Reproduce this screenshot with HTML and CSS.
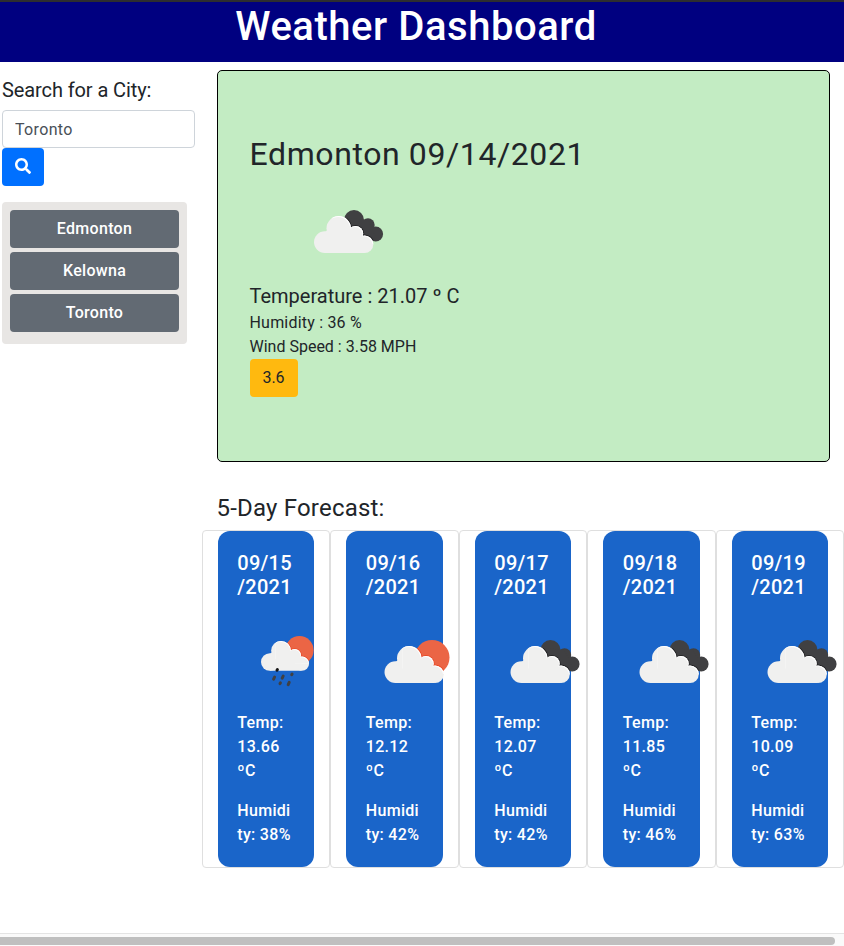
FILE: index.html
```html
<!DOCTYPE html>
<html lang="en">
<head>
<meta charset="utf-8">
<title>Weather Dashboard</title>
<link rel="stylesheet" href="styles.css">
</head>
<body>
<svg class="defs" width="0" height="0" aria-hidden="true">
  <defs>
    <g id="puffs"><circle cx="24.700" cy="18.300" r="12.200"/><circle cx="41.500" cy="23.700" r="7.700"/><circle cx="50.500" cy="34.200" r="8.800"/></g>
    <g id="cloud" fill="#f0f0ef"><use href="#puffs"/><circle cx="10.900" cy="32.100" r="10.900"/><path d="M11 43V22L25 12L41 20L50 30V43Z"/></g>
    <clipPath id="rim-clip"><path d="M18 0H70V34H18Z"/></clipPath>
    <g id="rim" clip-path="url(#rim-clip)"><use href="#puffs" fill="#fff"/><use href="#puffs" x="-.7" y=".9" fill="#f0f0ef"/><path d="M25 43V14L41 21L50 31V42Z" fill="#f0f0ef"/></g>
    <clipPath id="sun-clip"><circle cx="47.500" cy="17.500" r="17.500"/></clipPath>
    <g id="clouds">
      <g fill="#404042"><circle cx="40" cy="10" r="10"/><circle cx="54" cy="15" r="6.700"/><circle cx="61.700" cy="24" r="7.400"/><path d="M34 8L54 10L62 28L50 30Z"/></g>
      <g clip-path="url(#sun-clip)"><use href="#puffs" fill="#242426" stroke="#242426" stroke-width="2"/></g>
      <use href="#cloud"/>
      <use href="#rim"/>
    </g>
    <g id="sunny">
      <circle cx="47.500" cy="17.500" r="17.500" fill="#eb6545"/>
      <g clip-path="url(#sun-clip)"><use href="#puffs" fill="#e94b29" stroke="#e94b29" stroke-width="2"/></g>
      <use href="#cloud"/>
      <use href="#rim"/>
    </g>
    <g id="rain">
      <use href="#sunny" transform="translate(0 -4) scale(.81)"/>
      <g stroke="#404042" stroke-width="3" stroke-linecap="round"><path d="M16 30.200l.4-.7" stroke="#151515"/><path d="M12.600 39.200l1-2.200M21.200 38.200l1-2.200M27.200 44.600l1-2.200M19 43.600l.4-.7M30.700 34.700l.4-.7"/></g>
    </g>
  </defs>
</svg>
<div class="page">
  <header class="banner"><h1>Weather Dashboard</h1></header>
  <div class="layout">
    <aside class="sidebar">
      <label class="label" for="city">Search for a City:</label>
      <input class="input" id="city" type="text" value="Toronto">
      <button class="search" aria-label="Search"><svg width="16" height="16" viewBox="0 0 512 512"><path fill="#fff" d="M505 442.700L405.300 343c-4.500-4.500-10.600-7-17-7H372c27.600-35.300 44-79.700 44-128C416 93.100 322.900 0 208 0S0 93.100 0 208s93.100 208 208 208c48.300 0 92.700-16.400 128-44v16.300c0 6.400 2.500 12.500 7 17l99.700 99.700c9.400 9.400 24.600 9.400 33.900 0l28.300-28.300c9.400-9.400 9.400-24.600.1-34zM208 336c-70.700 0-128-57.200-128-128 0-70.700 57.200-128 128-128 70.700 0 128 57.200 128 128 0 70.700-57.200 128-128 128z"/></svg></button>
      <div class="history">
        <button class="city">Edmonton</button>
        <button class="city">Kelowna</button>
        <button class="city">Toronto</button>
      </div>
    </aside>
    <main class="main">
      <section class="today">
        <h2>Edmonton 09/14/2021</h2>
        <svg class="today-icon" width="180" height="100"><use href="#clouds" x="64" y="29"/></svg>
        <div class="temp">Temperature : 21.07 º C</div>
        <div class="hum">Humidity : 36 %</div>
        <div class="wind">Wind Speed : 3.58 MPH</div>
        <span class="uv">3.6</span>
      </section>
      <h3 class="forecast-title">5-Day Forecast:</h3>
      <section class="forecast">
        <div class="col"><div class="card"><h4>09/15<br>/2021</h4><svg class="icon" width="100" height="100"><use href="#rain" x="24" y="33"/></svg><p>Temp:<br>13.66<br>ºC</p><p>Humidi<br>ty: 38%</p></div></div>
        <div class="col"><div class="card"><h4>09/16<br>/2021</h4><svg class="icon" width="100" height="100"><use href="#sunny" x="18.500" y="33"/></svg><p>Temp:<br>12.12<br>ºC</p><p>Humidi<br>ty: 42%</p></div></div>
        <div class="col"><div class="card"><h4>09/17<br>/2021</h4><svg class="icon" width="100" height="100"><use href="#clouds" x="16.500" y="33"/></svg><p>Temp:<br>12.07<br>ºC</p><p>Humidi<br>ty: 42%</p></div></div>
        <div class="col"><div class="card"><h4>09/18<br>/2021</h4><svg class="icon" width="100" height="100"><use href="#clouds" x="16.500" y="33"/></svg><p>Temp:<br>11.85<br>ºC</p><p>Humidi<br>ty: 46%</p></div></div>
        <div class="col"><div class="card"><h4>09/19<br>/2021</h4><svg class="icon" width="100" height="100"><use href="#clouds" x="16.500" y="33"/></svg><p>Temp:<br>10.09<br>ºC</p><p>Humidi<br>ty: 63%</p></div></div>
      </section>
    </main>
  </div>
  <div class="scrollbar"><div class="thumb"></div></div>
</div>
</body>
</html>
```
FILE: styles.css
```css
* { box-sizing: border-box; }
body { margin: 0; background: #fff; color: #212529; font: 400 16px/24px Roboto, "Noto Sans", sans-serif; overflow: hidden; }
h1, h2, h3, h4, p { margin: 0; font-weight: 500; }
button, input { font: inherit; }
svg { display: block; }
.defs { position: absolute; }
.page { width: 844px; height: 946px; overflow: hidden; display: flex; flex-direction: column; }
.banner { height: 62px; flex: none; background: #000080; border-top: 2px solid #2d2d30; color: #fff; text-align: center; }
.banner h1 { font-size: 40px; line-height: 50px; letter-spacing: .55px; margin-right: 12px; }
.layout { flex: 1; display: flex; min-height: 0; }
.sidebar { width: 202px; flex: none; padding: 16px 7px 0 2px; }
.label { display: block; font-size: 20px; line-height: 24px; margin-bottom: 8px; letter-spacing: -.1px; }
.input { display: block; width: 193px; height: 38px; padding: 6px 12px; border: 1px solid #ced4da; border-radius: 4px; color: #495057; background: #fff; letter-spacing: .35px; }
.search { display: flex; align-items: center; justify-content: center; width: 42px; height: 38px; padding: 0 0 2px; border: 0; border-radius: 4px; background: #0070ff; }
.history { width: 185px; height: 142px; margin-top: 16px; padding: 8px; border-radius: 4px; background: #e8e6e4; display: flex; flex-direction: column; gap: 4px; }
.city { height: 38px; padding: 0; border: 0; border-radius: 4px; background: #626a73; color: #fff; font-weight: 500; letter-spacing: .3px; }
.main { width: 643px; flex: none; padding-top: 8px; }
.today { width: 613px; height: 392px; margin-left: 15px; padding: 64px 32px 64px 31.5px; background: #c3ecc3; border: 1px solid #000; border-radius: 5px; }
.today h2 { font-size: 32px; line-height: 38px; font-weight: 400; margin-bottom: 8px; letter-spacing: .6px; }
.temp { font-size: 20px; line-height: 30px; }
.hum { letter-spacing: .2px; }
.uv { display: flex; align-items: center; justify-content: center; width: 48px; height: 38px; border-radius: 4px; background: #ffb90f; }
.forecast-title { font-size: 24px; line-height: 29px; margin: 32px 0 7px 14.5px; font-weight: 400; letter-spacing: .2px; }
.forecast { display: grid; width: 642.5px; margin-left: -.2px; grid-template-columns: repeat(5, minmax(0, 1fr)); }
.col { min-width: 0; height: 338px; padding: 0 15px; border: 1px solid #dfdfdf; border-radius: 4px; }
.card { height: 336px; padding: 20px 0 20px 19.5px; border-radius: 12px; background: #1a65c9; color: #fff; white-space: nowrap; }
.card h4 { font-size: 20px; line-height: 24px; margin-bottom: 8px; letter-spacing: .25px; }
.icon { margin-bottom: 4px; overflow: visible; }
.card p { letter-spacing: .3px; }
.card p + p { margin-top: 16px; }
.scrollbar { height: 13px; flex: none; padding-top: 3px; border-top: 1px solid #e4e4e4; background: #fafafa; }
.thumb { width: 835px; height: 8px; border-radius: 0 4px 4px 0; background: #bfbfbf; }
```
